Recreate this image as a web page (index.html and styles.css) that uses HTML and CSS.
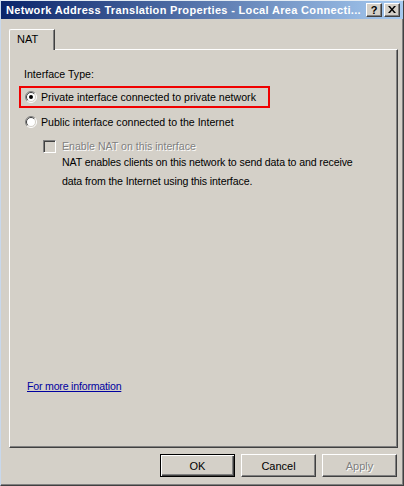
FILE: index.html
```html
<!DOCTYPE html>
<html>
<head>
<meta charset="utf-8">
<link rel="stylesheet" href="styles.css">
</head>
<body>
<div class="window">
  <div class="titlebar">
    <span class="title">Network Address Translation Properties - Local Area Connecti...</span>
    <div class="tbtns">
      <span class="tbtn help">?</span>
      <span class="tbtn close">
        <svg width="8" height="7" viewBox="0 0 8 7"><path d="M0 0h2l2 2.5L6 0h2L5 3.5 8 7H6L4 4.5 2 7H0l3-3.5z" fill="#000"/></svg>
      </span>
    </div>
  </div>
  <div class="content">
    <div class="tabs"><div class="tab">NAT</div></div>
    <div class="panel">
      <div class="label">Interface Type:</div>
      <div class="highlight">
        <div class="option">
          <svg class="radio" width="12" height="12" viewBox="0 0 12 12">
            <circle cx="6" cy="6" r="5" fill="#fff"/>
            <path d="M2.1 9.9A5.5 5.5 0 0 1 9.9 2.1" fill="none" stroke="#808080"/>
            <path d="M9.9 2.1A5.5 5.5 0 0 1 2.1 9.9" fill="none" stroke="#fff"/>
            <path d="M2.8 9.2A4.5 4.5 0 0 1 9.2 2.8" fill="none" stroke="#404040"/>
            <path d="M9.2 2.8A4.5 4.5 0 0 1 2.8 9.2" fill="none" stroke="#d4d0c8"/>
            <circle cx="6" cy="6" r="2" fill="#000"/>
          </svg>
          <span>Private interface connected to private network</span>
        </div>
      </div>
      <div class="option second">
        <svg class="radio" width="12" height="12" viewBox="0 0 12 12">
          <circle cx="6" cy="6" r="5" fill="#fff"/>
          <path d="M2.1 9.9A5.5 5.5 0 0 1 9.9 2.1" fill="none" stroke="#808080"/>
          <path d="M9.9 2.1A5.5 5.5 0 0 1 2.1 9.9" fill="none" stroke="#fff"/>
          <path d="M2.8 9.2A4.5 4.5 0 0 1 9.2 2.8" fill="none" stroke="#404040"/>
          <path d="M9.2 2.8A4.5 4.5 0 0 1 2.8 9.2" fill="none" stroke="#d4d0c8"/>
        </svg>
        <span>Public interface connected to the Internet</span>
      </div>
      <div class="sub">
        <div class="check-row">
          <span class="checkbox"></span>
          <span class="disabled">Enable NAT on this interface</span>
        </div>
        <div class="desc">NAT enables clients on this network to send data to and receive<br>data from the Internet using this interface.</div>
      </div>
      <a class="link" href="#">For more information</a>
    </div>
    <div class="buttons">
      <button class="btn default"><span>OK</span></button>
      <button class="btn"><span>Cancel</span></button>
      <button class="btn"><span class="disabled">Apply</span></button>
    </div>
  </div>
</div>
</body>
</html>
```
FILE: styles.css
```css
html, body {
  margin: 0;
  padding: 0;
  background: #d4d0c8;
}

.window {
  box-sizing: border-box;
  width: 404px;
  height: 486px;
  display: flex;
  flex-direction: column;
  background: #d4d0c8;
  border-style: solid;
  border-width: 1px 1px 1px 1px;
  border-color: #e4ecf4 #404040 #404040 #c8d8ec;
  box-shadow: inset -1px -1px #808080;
  font-family: "Liberation Sans", Arial, sans-serif;
  font-size: 10.6px;
  color: #000;
}

.titlebar {
  height: 18px;
  flex: none;
  display: flex;
  align-items: center;
  justify-content: space-between;
  padding: 0 3px 0 5px;
  background: linear-gradient(to right, #0a246a, #a6caf0);
}

.title {
  color: #fff;
  font-weight: bold;
  font-size: 11px;
  letter-spacing: 0.33px;
  white-space: nowrap;
  line-height: 18px;
}

.tbtns {
  display: flex;
  gap: 2px;
}

.tbtn {
  box-sizing: border-box;
  width: 16px;
  height: 14px;
  display: flex;
  align-items: center;
  justify-content: center;
  background: #d4d0c8;
  border: 1px solid;
  border-color: #fff #404040 #404040 #fff;
  box-shadow: inset -1px -1px #808080;
  font-weight: bold;
  font-size: 11px;
  line-height: 12px;
}

.help {
  padding-bottom: 1px;
}

.close svg {
  display: block;
  margin-top: -1px;
}

.content {
  flex: 1;
  display: flex;
  flex-direction: column;
  padding: 10px 5px 8px 8px;
}

.tabs {
  display: flex;
  height: 20px;
  flex: none;
}

.tab {
  box-sizing: border-box;
  width: 46px;
  height: 21px;
  position: relative;
  z-index: 1;
  background: #d4d0c8;
  border-top: 1px solid #fff;
  border-left: 1px solid #fff;
  border-right: 1px solid #404040;
  box-shadow: inset -1px 0 #808080;
  border-top-left-radius: 2px;
  padding-left: 7px;
  line-height: 18px;
  font-size: 11px;
}

.panel {
  flex: 1;
  box-sizing: border-box;
  display: flex;
  flex-direction: column;
  align-items: flex-start;
  border-style: solid;
  border-width: 1px;
  border-color: #fff #404040 #404040 #fff;
  box-shadow: inset -1px -1px #808080;
  padding: 18px 0 0 9px;
}

.label {
  line-height: 13px;
  padding-left: 5px;
}

.highlight {
  box-sizing: border-box;
  width: 251px;
  height: 22px;
  margin-top: 5px;
  border: 2px solid #f00000;
  padding: 0 0 0 4px;
  display: flex;
  align-items: center;
}

.option {
  display: flex;
  align-items: center;
  gap: 4px;
  line-height: 13px;
}

.radio {
  display: block;
  flex: none;
}

.option.second {
  margin-top: 8px;
  padding-left: 6px;
  height: 12px;
}

.sub {
  padding-left: 24px;
  margin-top: 12px;
}

.check-row {
  display: flex;
  align-items: center;
  gap: 6px;
  height: 13px;
  line-height: 13px;
}

.checkbox {
  box-sizing: border-box;
  width: 13px;
  height: 13px;
  flex: none;
  background: #d4d0c8;
  border: 1px solid;
  border-color: #808080 #fff #fff #808080;
  box-shadow: inset 1px 1px #404040, inset -1px -1px #d4d0c8;
}

.disabled {
  color: #808080;
  text-shadow: 1px 1px 0 #fff;
}

.desc {
  padding-left: 19px;
  line-height: 19px;
  letter-spacing: -0.12px;
}

.link {
  margin-top: auto;
  margin-bottom: 54px;
  margin-left: 8px;
  color: #0000a0;
  text-decoration: underline;
  line-height: 13px;
  letter-spacing: -0.2px;
}

.buttons {
  display: flex;
  justify-content: flex-end;
  gap: 6px;
  margin-top: 6px;
  padding-right: 1px;
  flex: none;
}

.btn {
  box-sizing: border-box;
  width: 75px;
  height: 23px;
  padding: 0;
  background: #d4d0c8;
  border: 1px solid;
  border-color: #fff #404040 #404040 #fff;
  box-shadow: inset -1px -1px #808080;
  font-family: "Liberation Sans", Arial, sans-serif;
  font-size: 11px;
  color: #000;
  display: flex;
  align-items: center;
  justify-content: center;
}

.btn.default {
  border: 1px solid #000;
  box-shadow: inset 1px 1px #fff, inset -1px -1px #404040, inset -2px -2px #808080;
}
```
